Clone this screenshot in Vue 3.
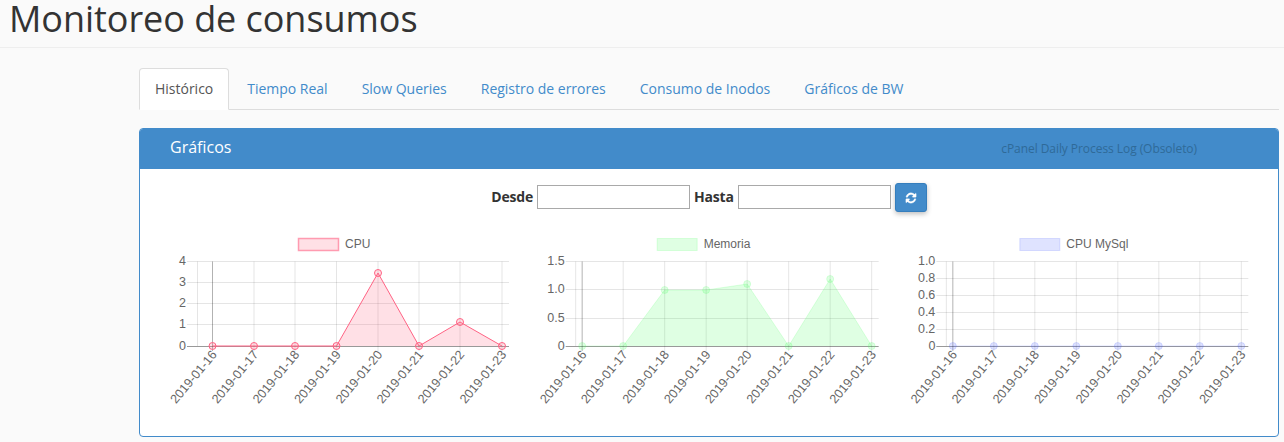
<script setup>
const RED = '255,99,132'
const GREEN = '75,255,100'
const BLUE = '75,100,255'

function line(origin, xs, left, tickStart, right, ys, labels, values, color, name, legendX, fillA, strokeA, ring) {
  const toX = (x) => x - origin
  const px = xs.map(toX)
  const pts = px.map((x, i) => [x, values[i]])
  return {
    name,
    px,
    left: toX(left),
    tickStart: toX(tickStart),
    right: toX(right),
    ys,
    labels,
    pts,
    ring,
    poly: pts.map((p) => p.join(',')).join(' '),
    area: `${px[0]},113 ` + pts.map((p) => p.join(',')).join(' ') + ` ${px[px.length - 1]},113`,
    fill: `rgba(${color},${fillA})`,
    stroke: `rgba(${color},${strokeA})`,
    legendX: toX(legendX)
  }
}

const dates = ['2019-01-16', '2019-01-17', '2019-01-18', '2019-01-19', '2019-01-20', '2019-01-21', '2019-01-22', '2019-01-23']

const charts = [
  line(155, [212.5, 254, 295, 336.5, 378, 419, 460, 502], 197.5, 187, 509,
    [28.5, 49.5, 70.5, 91.5, 113.5], ['4', '3', '2', '1', '0'],
    [113, 113, 113, 113, 40, 113, 89, 113], RED, 'CPU', 298.5, 0.2, 1, true),
  line(524.33, [582.5, 623.5, 665, 706.5, 747.5, 789, 830.5, 872], 576, 566, 879,
    [28.5, 56.5, 85.5, 113.5], ['1.5', '1.0', '0.5', '0'],
    [113, 113, 57, 57, 51, 113, 46, 113], GREEN, 'Memoria', 657.5, 0.18, 0.18, false),
  line(893.67, [952.5, 993.5, 1034.5, 1076, 1117.5, 1158.5, 1199.5, 1241], 946, 936, 1248,
    [28.5, 45.5, 62.5, 79.5, 96.5, 113.5], ['1.0', '0.8', '0.6', '0.4', '0.2', '0'],
    [113, 113, 113, 113, 113, 113, 113, 113], BLUE, 'CPU MySql', 1019.5, 0.18, 0.18, false)
]

const tabs = ['Histórico', 'Tiempo Real', 'Slow Queries', 'Registro de errores', 'Consumo de Inodos', 'Gráficos de BW']
</script>

<template>
  <div class="page">
    <header class="top">
      <h1>Monitoreo de consumos</h1>
    </header>
    <main class="content">
      <ul class="tabs">
        <li v-for="(t, i) in tabs" :key="t" :class="{ active: i === 0 }">{{ t }}</li>
      </ul>
      <section class="panel">
        <div class="heading">
          <span class="title">Gráficos</span>
          <span class="side">cPanel Daily Process Log (Obsoleto)</span>
        </div>
        <div class="body">
          <form class="filter" @submit.prevent>
            <label>Desde</label>
            <input type="text" />
            <label>Hasta</label>
            <input type="text" />
            <button type="button" aria-label="Actualizar">
              <svg viewBox="0 0 1792 1792" width="12" height="12">
                <path fill="#fff" stroke="#fff" stroke-width="50" d="M1639 1056q0 5-1 7-64 268-268 434.5t-478 166.5q-146 0-282.5-55t-243.5-157l-129 129q-19 19-45 19t-45-19-19-45v-448q0-26 19-45t45-19h448q26 0 45 19t19 45-19 45l-137 137q71 66 161 102t187 36q134 0 250-65t186-179q11-17 53-117 8-23 30-23h192q13 0 22.5 9.5t9.5 22.5zm25-800v448q0 26-19 45t-45 19h-448q-26 0-45-19t-19-45 19-45l138-138q-148-137-349-137-134 0-250 65t-186 179q-11 17-53 117-8 23-30 23h-199q-13 0-22.5-9.5t-9.5-22.5v-7q65-268 270-434.5t480-166.5q146 0 284 55.5t245 156.5l130-129q19-19 45-19t45 19 19 45z" />
              </svg>
            </button>
          </form>
          <div class="charts">
            <svg v-for="c in charts" :key="c.name" class="chart" height="190">
              <rect :x="c.legendX" y="5.5" width="40" height="12" :fill="c.fill" :stroke="c.ring ? 'rgba(255,99,132,.6)' : c.stroke" :stroke-width="c.ring ? 1.5 : 1" />
              <text :x="c.legendX + 46.5" y="15" class="lbl">{{ c.name }}</text>

              <line :x1="c.left" :x2="c.left" y1="28.5" y2="113" class="grid" />
              <line v-for="(x, i) in c.px" :key="'v' + i" :x1="x" :x2="x" y1="28.5" y2="118" :class="i === 0 ? 'zero' : 'grid'" />
              <line v-for="(y, i) in c.ys" :key="'h' + i" :x1="c.tickStart" :x2="c.right" :y1="y" :y2="y" :class="y === 113.5 ? 'base' : 'grid'" />

              <text v-for="(l, i) in c.labels" :key="'y' + i" :x="c.tickStart - 1" :y="c.ys[i] + 3" class="lbl ylbl">{{ l }}</text>

              <polygon :points="c.area" :fill="c.fill" />
              <polyline :points="c.poly" fill="none" :stroke="c.stroke" stroke-width="1" />
              <circle v-for="(p, i) in c.pts" :key="'p' + i" :cx="p[0]" :cy="p[1]" r="3.5" :fill="c.fill" :stroke="c.stroke" />

              <text v-for="(d, i) in dates" :key="d" class="lbl xlbl" :transform="`translate(${c.px[i] + 5} 122) rotate(-50)`">{{ d }}</text>
            </svg>
          </div>
        </div>
      </section>
    </main>
  </div>
</template>

<style>
html, body { margin: 0; background: #fafafa; }
</style>

<style scoped>
.page {
  font-family: "Open Sans", sans-serif;
  font-size: 14px;
  color: #333;
  background: #fafafa;
  min-height: 442px;
  box-sizing: border-box;
  overflow: hidden;
}
.top {
  height: 47px;
  border-bottom: 1px solid #eee;
  padding-left: 9px;
}
h1 {
  margin: 0;
  font-size: 36px;
  font-weight: 400;
  line-height: 38px;
  letter-spacing: -0.05px;
}
.content { padding: 20px 5px 0 139px; }
.tabs {
  list-style: none;
  margin: 0;
  padding: 0;
  display: flex;
  gap: 2px;
  height: 41px;
  border-bottom: 1px solid #ddd;
}
.tabs li {
  height: 20px;
  line-height: 20px;
  padding: 10px 15px;
  border: 1px solid transparent;
  border-radius: 4px 4px 0 0;
  color: #428bca;
  letter-spacing: -0.01px;
}
.tabs li.active {
  color: #555;
  background: #fff;
  border-color: #ddd #ddd #fff;
}
.panel {
  margin-top: 18px;
  border: 1px solid #428bca;
  border-radius: 4px;
  background: #fff;
  overflow: hidden;
}
.heading {
  height: 40px;
  background: #428bca;
  display: flex;
  align-items: center;
  justify-content: space-between;
  padding: 0 81px 4px 30px;
  box-sizing: border-box;
}
.title { color: #fff; font-size: 16px; }
.side { color: #2f6a98; font-size: 12px; padding-top: 3px; letter-spacing: -0.06px; }
.body { padding: 14px 15px 13px; }
.filter {
  display: flex;
  justify-content: center;
  align-items: flex-start;
  gap: 4px;
  height: 29px;
  margin-bottom: 21px;
}
.filter label {
  font-weight: 700;
  color: #333;
  line-height: 24px;
  margin-top: 2px;
  letter-spacing: -0.2px;
}
.filter input {
  box-sizing: border-box;
  width: 153px;
  height: 24px;
  border: 1px solid #a9a9a9;
  background: #fff;
  margin: 2px 0 0;
  padding: 0;
}
.filter button {
  box-sizing: border-box;
  width: 32px;
  height: 29px;
  padding: 0;
  border: 1px solid #357ebd;
  border-radius: 3px;
  background: #428bca;
  box-shadow: 0 2px 5px rgba(0, 0, 0, .26);
  display: flex;
  align-items: center;
  justify-content: center;
}
.charts {
  display: grid;
  grid-template-columns: repeat(3, 1fr);
}
.chart { width: 100%; display: block; }
.lbl {
  font-family: "Liberation Sans", Arial, sans-serif;
  font-size: 12px;
  fill: #666;
}
.ylbl { text-anchor: end; font-size: 12.5px; }
.xlbl { text-anchor: end; font-size: 12.6px; }
.grid { stroke: rgba(0, 0, 0, .1); stroke-width: 1; }
.zero { stroke: rgba(0, 0, 0, .3); stroke-width: 1; }
.base { stroke: rgba(0, 0, 0, .4); stroke-width: 1; }
</style>
